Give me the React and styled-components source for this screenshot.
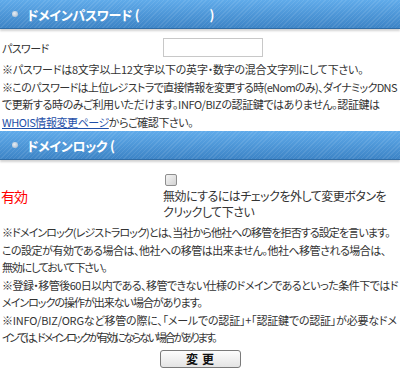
import React from "react";
import styled, { createGlobalStyle } from "styled-components";

const GlobalStyle = createGlobalStyle`
  html, body {
    margin: 0;
    padding: 0;
    background: #fff;
  }
  body {
    font-family: "Noto Sans CJK JP", "Liberation Sans", sans-serif;
    color: #333;
    font-feature-settings: "palt";
  }
`;

const Page = styled.div`
  width: 400px;
  overflow: hidden;
`;

const Header = styled.div`
  height: 28px;
  display: flex;
  align-items: center;
  padding-left: 12px;
  gap: 9px;
  color: #fff;
  font-size: 13px;
  font-weight: bold;
  letter-spacing: -0.3px;
  white-space: nowrap;
  border-bottom: 1px solid #2f6ca6;
  box-shadow: 0 2px 2px rgba(0, 0, 0, 0.18);
  background:
    repeating-linear-gradient(
      -45deg,
      rgba(255, 255, 255, 0.09) 0 1px,
      rgba(255, 255, 255, 0) 1px 3px
    ),
    linear-gradient(#60abea, #3d84c6);
`;

const Dot = styled.span`
  width: 6px;
  height: 6px;
  border-radius: 50%;
  background: radial-gradient(circle at 40% 40%, #e6eef6, #9fb4c9);
  flex: none;
`;

const Gap = styled.span`
  display: inline-block;
  width: ${(p) => p.$w}px;
`;

const FieldRow = styled.div`
  display: grid;
  grid-template-columns: 163px 100px;
  align-items: center;
  margin-top: 9px;
  font-size: 11px;
  letter-spacing: -0.6px;
`;

const Label = styled.span`
  padding-left: 2px;
`;

const Input = styled.input`
  box-sizing: border-box;
  width: 100px;
  height: 19px;
  margin: 0;
  border: 1px solid #c8c8c8;
  background: #fff;
`;

const Notes = styled.div`
  margin: ${(p) => p.$mt}px 0 ${(p) => p.$mb}px;
  padding-left: 2px;
  font-size: 11px;
  line-height: 17.5px;
  white-space: nowrap;
`;

const Line = styled.div`
  letter-spacing: ${(p) => p.$ls ?? -0.45}px;
`;

const Link = styled.a`
  color: #1f4fa8;
  text-decoration: underline;
`;

const LockRow = styled.div`
  display: grid;
  grid-template-columns: 160px 1fr;
  align-items: center;
  margin-top: 11px;
`;

const Status = styled.span`
  padding-left: 1px;
  color: #f00;
  font-size: 14px;
  letter-spacing: -1px;
`;

const LockCell = styled.div`
  display: flex;
  flex-direction: column;
  align-items: flex-start;
  padding-left: 3px;
  font-size: 12px;
  letter-spacing: -0.5px;
  line-height: 16px;
  white-space: nowrap;
  color: #333;
`;

const Check = styled.input`
  appearance: none;
  box-sizing: border-box;
  width: 12px;
  height: 12px;
  margin: 3px 3px 2px 2px;
  border: 1px solid #8e8e8e;
  border-radius: 2px;
  background: linear-gradient(135deg, #f4f4f4, #d2d2d2);
`;

const Actions = styled.div`
  display: flex;
  justify-content: center;
`;

const Button = styled.button`
  width: 81px;
  height: 18px;
  padding: 0;
  border: 1px solid #7a7a7a;
  border-radius: 3px;
  background: linear-gradient(#fdfdfd, #e4e4e4);
  font-family: inherit;
  font-size: 12px;
  font-weight: bold;
  line-height: 16px;
  color: #111;
  letter-spacing: 4px;
  text-indent: 4px;
`;

export default function App() {
  return (
    <Page>
      <GlobalStyle />
      <Header>
        <Dot />
        <span>
          ドメインパスワード (<Gap $w={70} />)
        </span>
      </Header>
      <FieldRow>
        <Label>パスワード</Label>
        <Input type="password" />
      </FieldRow>
      <Notes $mt={4} $mb={0}>
        <Line $ls={-0.23}>
          ※パスワードは8文字以上12文字以下の英字・数字の混合文字列にして下さい。
        </Line>
        <Line $ls={-0.65}>
          ※このパスワードは上位レジストラで直接情報を変更する時(eNomのみ)、ダイナミックDNS
        </Line>
        <Line $ls={-0.4}>
          で更新する時のみご利用いただけます。INFO/BIZの認証鍵ではありません。認証鍵は
        </Line>
        <Line>
          <Link href="#">WHOIS情報変更ページ</Link>からご確認下さい。
        </Line>
      </Notes>
      <Header>
        <Dot />
        <span>ドメインロック (</span>
      </Header>
      <LockRow>
        <Status>有効</Status>
        <LockCell>
          <Check type="checkbox" />
          <span>無効にするにはチェックを外して変更ボタンを</span>
          <span>クリックして下さい</span>
        </LockCell>
      </LockRow>
      <Notes $mt={4} $mb={3}>
        <Line $ls={-0.9}>
          ※ドメインロック(レジストラロック)とは、当社から他社への移管を拒否する設定を言います。
        </Line>
        <Line $ls={-0.5}>
          この設定が有効である場合は、他社への移管は出来ません。他社へ移管される場合は、
        </Line>
        <Line $ls={-1.2}>無効にしておいて下さい。</Line>
        <Line $ls={-0.55}>
          ※登録・移管後60日以内である、移管できない仕様のドメインであるといった条件下ではド
        </Line>
        <Line $ls={-1}>メインロックの操作が出来ない場合があります。</Line>
        <Line $ls={-0.2}>
          ※INFO/BIZ/ORGなど移管の際に、「メールでの認証」+「認証鍵での認証」が必要なドメ
        </Line>
        <Line $ls={-2.2}>
          インでは、ドメインロックが有効にならない場合があります。
        </Line>
      </Notes>
      <Actions>
        <Button type="button">変更</Button>
      </Actions>
    </Page>
  );
}
